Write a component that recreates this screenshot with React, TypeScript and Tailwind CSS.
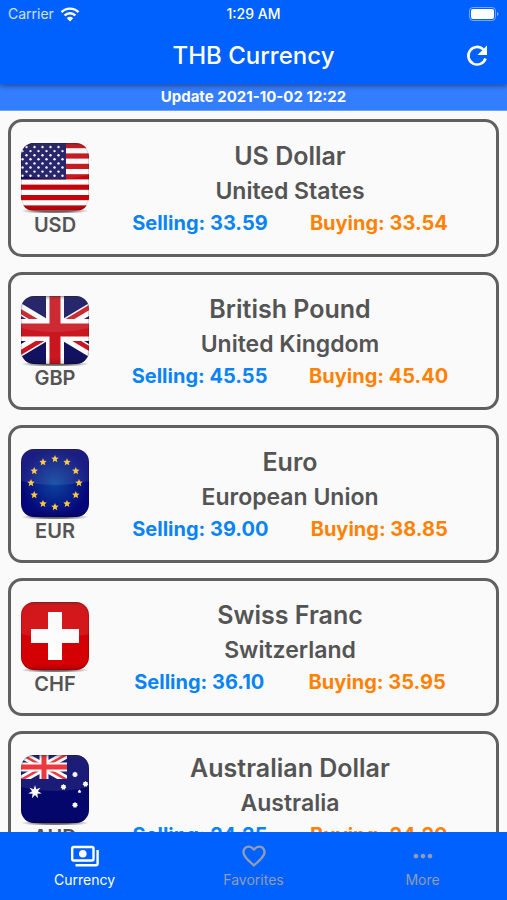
import { useId, useState, type ReactNode } from "react";
import { MdMoreHoriz, MdFavoriteBorder } from "react-icons/md";

type Currency = {
  code: string;
  name: string;
  country: string;
  selling: string;
  buying: string;
};

const currencies: Currency[] = [
  { code: "USD", name: "US Dollar", country: "United States", selling: "33.59", buying: "33.54" },
  { code: "GBP", name: "British Pound", country: "United Kingdom", selling: "45.55", buying: "45.40" },
  { code: "EUR", name: "Euro", country: "European Union", selling: "39.00", buying: "38.85" },
  { code: "CHF", name: "Swiss Franc", country: "Switzerland", selling: "36.10", buying: "35.95" },
  { code: "AUD", name: "Australian Dollar", country: "Australia", selling: "24.25", buying: "24.20" },
];

function starPoints(cx: number, cy: number, r: number, inner: number, tips: number) {
  const points: string[] = [];
  for (let i = 0; i < tips * 2; i++) {
    const radius = i % 2 === 0 ? r : inner;
    const angle = (Math.PI * i) / tips - Math.PI / 2;
    points.push(`${cx + radius * Math.cos(angle)},${cy + radius * Math.sin(angle)}`);
  }
  return points.join(" ");
}

function UsFlag() {
  return (
    <>
      <rect width="68" height="68" fill="#fff" />
      {[0, 1, 2, 3, 4, 5, 6].map((i) => (
        <rect key={i} y={i * 10.4} width="68" height="5.2" fill="#c4060c" />
      ))}
      <rect width="45" height="36.4" fill="#14115f" />
      {[0, 1, 2, 3, 4, 5, 6, 7].map((row) =>
        [0, 1, 2, 3, 4, 5].map((col) => {
          const x = (row % 2 === 0 ? 5.5 : 1.5) + col * 8;
          if (x > 44) return null;
          return <circle key={`${row}-${col}`} cx={x} cy={4 + row * 4.1} r="1.2" fill="#fff" />;
        }),
      )}
    </>
  );
}

function UkFlag() {
  return (
    <>
      <rect width="68" height="68" fill="#131260" />
      <path d="M-6 10L74 58M74 10L-6 58" stroke="#fff" strokeWidth="11" />
      <path d="M-6 12L34 36M34 32L74 8M34 32L74 56M-6 60L34 36" stroke="#cc1620" strokeWidth="4.5" />
      <path d="M34 0V68" stroke="#fff" strokeWidth="18" />
      <path d="M0 34H68" stroke="#fff" strokeWidth="22" />
      <path d="M34 0V68" stroke="#cc1620" strokeWidth="11" />
      <path d="M0 34H68" stroke="#cc1620" strokeWidth="13" />
    </>
  );
}

function EuFlag({ glow }: { glow: string }) {
  return (
    <>
      <radialGradient id={glow}>
        <stop offset="0" stopColor="#0b45a0" />
        <stop offset="1" stopColor="#05067a" />
      </radialGradient>
      <rect width="68" height="68" fill={`url(#${glow})`} />
      {Array.from({ length: 12 }, (_, i) => {
        const angle = (Math.PI * i) / 6;
        return (
          <polygon
            key={i}
            points={starPoints(34 + 24 * Math.sin(angle), 34 - 24 * Math.cos(angle), 3.9, 1.8, 5)}
            fill="#ffc93c"
          />
        );
      })}
    </>
  );
}

function SwissFlag() {
  return (
    <>
      <rect width="68" height="68" fill="#d40004" />
      <path d="M27 10H41V27H58V41H41V58H27V41H10V27H27Z" fill="#fff" />
    </>
  );
}

function AuFlag() {
  return (
    <>
      <rect width="68" height="68" fill="#05066c" />
      <svg width="46" height="24" viewBox="0 0 46 24">
        <path d="M-2 -2L48 26M48 -2L-2 26" stroke="#fff" strokeWidth="8" />
        <path d="M-2 -2L48 26M48 -2L-2 26" stroke="#f0252c" strokeWidth="2.5" />
        <path d="M23 0V24M0 12H46" stroke="#fff" strokeWidth="9" />
        <path d="M23 0V24M0 12H46" stroke="#f0252c" strokeWidth="5" />
      </svg>
      <polygon points={starPoints(14, 37, 7, 3, 7)} fill="#fff" />
      <polygon points={starPoints(42.5, 32, 3, 2.2, 7)} fill="#fff" />
      <polygon points={starPoints(54, 19.5, 3, 2.2, 7)} fill="#fff" />
      <polygon points={starPoints(64.5, 29, 3, 2.2, 7)} fill="#fff" />
      <polygon points={starPoints(54, 50, 3, 2.2, 7)} fill="#fff" />
      <polygon points={starPoints(58.5, 36.5, 2, 1.2, 5)} fill="#fff" />
    </>
  );
}

function Flag({ code }: { code: string }) {
  const id = useId().replace(/[^a-zA-Z0-9]/g, "");
  return (
    <svg width="70" height="70" viewBox="-1 0 70 70" aria-hidden="true">
      <defs>
        <clipPath id={`clip${id}`}>
          <rect width="68" height="68" rx="13" />
        </clipPath>
        <linearGradient id={`edge${id}`} x2="0" y2="1">
          <stop offset="0" stopColor="#333" stopOpacity="0.35" />
          <stop offset="0.06" stopColor="#333" stopOpacity="0.03" />
          <stop offset="0.9" stopColor="#000" stopOpacity="0" />
          <stop offset="1" stopColor="#000" stopOpacity="0.15" />
        </linearGradient>
        <radialGradient id={`shadow${id}`}>
          <stop offset="0.4" stopColor="#000" stopOpacity="0.6" />
          <stop offset="1" stopColor="#000" stopOpacity="0" />
        </radialGradient>
      </defs>
      <ellipse cx="34" cy="68" rx="34" ry="3" fill={`url(#shadow${id})`} />
      <g clipPath={`url(#clip${id})`}>
        {code === "USD" && <UsFlag />}
        {code === "GBP" && <UkFlag />}
        {code === "EUR" && <EuFlag glow={`glow${id}`} />}
        {code === "CHF" && <SwissFlag />}
        {code === "AUD" && <AuFlag />}
        <path d="M0 0H68V32Q34 40 0 32Z" fill="#fff" opacity="0.09" />
        <rect width="68" height="68" fill={`url(#edge${id})`} />
      </g>
      <rect x="0.5" y="0.5" width="67" height="67" rx="13" fill="none" stroke="#000" strokeOpacity="0.15" />
    </svg>
  );
}

function CurrencyCard({ item }: { item: Currency }) {
  return (
    <li className="flex items-center rounded-[14px] border-[3px] border-[#606060] py-[17px] pr-1.5 pl-[9px] font-semibold text-[#545454]">
      <div className="flex flex-col items-center pt-1">
        <Flag code={item.code} />
        <span className="text-xl leading-6">{item.code}</span>
      </div>
      <div className="flex-1 text-center">
        <h2 className="text-[25px] leading-[35px]">{item.name}</h2>
        <p className="text-[23px] leading-[35px]">{item.country}</p>
        <div className="flex justify-evenly text-xl leading-7 font-bold">
          <span className="text-[#0a84f5]">Selling: {item.selling}</span>
          <span className="text-[#ff8205]">Buying: {item.buying}</span>
        </div>
      </div>
    </li>
  );
}

function WifiIcon() {
  return (
    <svg width="20" height="15" viewBox="0 0 20 15" fill="none" stroke="#fff" strokeWidth="2.4" aria-hidden="true">
      <path d="M1.5 5.2A12 12 0 0 1 18.5 5.2" />
      <path d="M4.6 8.5A7.6 7.6 0 0 1 15.4 8.5" />
      <path d="M10 14.5L6.800 11.2A4.5 4.5 0 0 1 13.2 11.2Z" fill="#fff" stroke="none" />
    </svg>
  );
}

function RefreshIcon() {
  return (
    <svg width="28" height="28" viewBox="0 0 28 28" fill="none" stroke="currentColor" strokeWidth="2.6" aria-hidden="true">
      <path d="M22.5 16.500A8.800 8.800 0 1 1 20.200 7.300" />
      <path d="M24 3.500V13H14.500Z" fill="currentColor" stroke="none" />
    </svg>
  );
}

function PaymentsIcon() {
  return (
    <svg width="28" height="24" viewBox="0 0 28 24" fill="none" stroke="currentColor" strokeWidth="2.4" aria-hidden="true">
      <rect x="1.2" y="3" width="21.3" height="13.5" rx="1.5" />
      <circle cx="11.8" cy="9.7" r="3.8" fill="currentColor" stroke="none" />
      <path d="M26.6 6V20A1.2 1.2 0 0 1 25.4 21.2H4.5" />
    </svg>
  );
}

const tabs: { label: string; icon: ReactNode }[] = [
  { label: "Currency", icon: <PaymentsIcon /> },
  { label: "Favorites", icon: <MdFavoriteBorder size={28} /> },
  { label: "More", icon: <MdMoreHoriz size={28} /> },
];

function App() {
  const [active, setActive] = useState("Currency");

  return (
    <div className="flex h-screen flex-col bg-[#fafafa] font-['Inter',sans-serif]">
      <header className="z-10 bg-[#0061ff] text-white shadow-[0_2px_5px_rgba(0,0,0,0.4)]">
        <div className="grid h-7 grid-cols-3 items-center px-2 text-sm">
          <span className="flex items-center gap-1.5 text-white/80">
            Carrier
            <WifiIcon />
          </span>
          <span className="text-center font-medium">1:29 AM</span>
          <svg className="justify-self-end" width="30" height="14" viewBox="0 0 30 14" aria-hidden="true">
            <rect x="0.5" y="0.5" width="26" height="13" rx="3.5" fill="none" stroke="#fff" strokeOpacity="0.45" />
            <rect x="2" y="2" width="23" height="10" rx="2" fill="#fff" />
            <path d="M28 5V9Q29.5 8.5 29.5 7T28 5Z" fill="#fff" fillOpacity="0.5" />
          </svg>
        </div>
        <div className="grid h-14 grid-cols-[1fr_auto_1fr] items-center px-4">
          <h1 className="col-start-2 text-2xl font-medium">THB Currency</h1>
          <button className="justify-self-end" aria-label="Refresh">
            <RefreshIcon />
          </button>
        </div>
      </header>
      <p className="border-b border-[#6ba3ff] bg-[#337dff] text-center text-[15px] leading-[26px] font-bold text-white">
        Update 2021-10-02 12:22
      </p>

      <main className="min-h-0 flex-1 overflow-y-auto px-2 pt-2 [scrollbar-width:none]">
        <ul className="flex flex-col gap-[15px]">
          {currencies.map((item) => (
            <CurrencyCard key={item.code} item={item} />
          ))}
        </ul>
      </main>

      <nav className="grid h-[68px] grid-cols-3 bg-[#0061ff] text-sm">
        {tabs.map((tab) => (
          <button
            key={tab.label}
            onClick={() => setActive(tab.label)}
            className={`flex flex-col items-center justify-center ${
              active === tab.label ? "text-white" : "text-[#8f9db3]"
            }`}
          >
            <span className="flex h-7 items-center">{tab.icon}</span>
            {tab.label}
          </button>
        ))}
      </nav>
    </div>
  );
}

export default App;
